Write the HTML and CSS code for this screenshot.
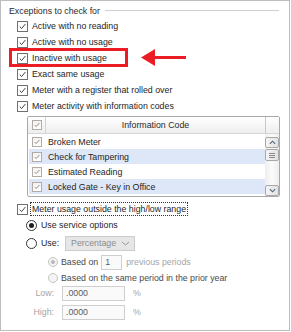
FILE: index.html
```html
<!DOCTYPE html>
<html lang="en">
<head>
  <meta charset="UTF-8" />
  <title>Exceptions to check for</title>
  <link rel="stylesheet" href="styles.css">
</head>
<body>
  <div class="frame">
    <div class="group-title">
      <span>Exceptions to check for</span>
      <div class="rule"></div>
    </div>

    <div class="checks">
      <div class="row"><span class="cb"><svg viewBox="0 0 11 11"><polyline points="2,5.5 4.5,8 9,2.5" /></svg></span>Active with no reading</div>
      <div class="row"><span class="cb"><svg viewBox="0 0 11 11"><polyline points="2,5.5 4.5,8 9,2.5" /></svg></span>Active with no usage</div>
      <div class="row"><span class="cb"><svg viewBox="0 0 11 11"><polyline points="2,5.5 4.5,8 9,2.5" /></svg></span>Inactive with usage</div>
      <div class="row"><span class="cb"><svg viewBox="0 0 11 11"><polyline points="2,5.5 4.5,8 9,2.5" /></svg></span>Exact same usage</div>
      <div class="row"><span class="cb"><svg viewBox="0 0 11 11"><polyline points="2,5.5 4.5,8 9,2.5" /></svg></span>Meter with a register that rolled over</div>
      <div class="row"><span class="cb"><svg viewBox="0 0 11 11"><polyline points="2,5.5 4.5,8 9,2.5" /></svg></span>Meter activity with information codes</div>
    </div>

    <div class="codes">
      <div class="codes-head">
        <div class="hcell cb-col"><span class="cb small"><svg viewBox="0 0 10 10"><polyline points="2,5 4,7 8,2.5" /></svg></span></div>
        <div class="hcell name">Information Code</div>
        <div class="hcell corner"></div>
      </div>
      <div class="codes-body">
        <div class="code-rows">
          <div class="code-row"><div class="cb-col"><span class="cb small"><svg viewBox="0 0 10 10"><polyline points="2,5 4,7 8,2.5" /></svg></span></div><div class="code-name">Broken Meter</div></div>
          <div class="code-row alt"><div class="cb-col"><span class="cb small"><svg viewBox="0 0 10 10"><polyline points="2,5 4,7 8,2.5" /></svg></span></div><div class="code-name">Check for Tampering</div></div>
          <div class="code-row"><div class="cb-col"><span class="cb small"><svg viewBox="0 0 10 10"><polyline points="2,5 4,7 8,2.5" /></svg></span></div><div class="code-name">Estimated Reading</div></div>
          <div class="code-row alt"><div class="cb-col"><span class="cb small"><svg viewBox="0 0 10 10"><polyline points="2,5 4,7 8,2.5" /></svg></span></div><div class="code-name">Locked Gate - Key in Office</div></div>
        </div>
        <div class="scroll">
          <div class="sbtn"><svg viewBox="0 0 8 5"><polyline points="1,4 4,1 7,4" /></svg></div>
          <div class="thumb"><svg viewBox="0 0 6 5"><path d="M0 0.5H6M0 2.5H6M0 4.5H6" /></svg></div>
          <div class="track"></div>
          <div class="sbtn"><svg viewBox="0 0 8 5"><polyline points="1,1 4,4 7,1" /></svg></div>
        </div>
      </div>
    </div>

    <div class="row range"><span class="cb"><svg viewBox="0 0 11 11"><polyline points="2,5.5 4.5,8 9,2.5" /></svg></span><span class="focus">Meter usage outside the high/low range</span></div>

    <div class="options">
      <div class="opt first"><span class="radio on"></span>Use service options</div>
      <div class="opt use"><span class="radio"></span>Use:<div class="select">Percentage<svg viewBox="0 0 9 5"><polyline points="1,1 4.5,4 8,1" /></svg></div></div>
      <div class="opt sub based"><span class="radio off on"></span>Based on<div class="field small">1</div><span class="muted">previous periods</span></div>
      <div class="opt sub prior"><span class="radio off"></span>Based on the same period in the prior year</div>
      <div class="limit low"><span class="lbl">Low:</span><div class="field">.0000</div><span class="muted">%</span></div>
      <div class="limit high"><span class="lbl">High:</span><div class="field">.0000</div><span class="muted">%</span></div>
    </div>

    <div class="mark"></div>
    <svg class="arrow" viewBox="0 0 45 17"><polygon points="0,8.5 14,0 14,17" /><rect x="13" y="7" width="32" height="3" /></svg>
  </div>
</body>
</html>
```

FILE: styles.css
```css
body {
  margin: 0;
  background: #ffffff;
  font-family: "Liberation Sans", Arial, sans-serif;
  font-size: 8.8px;
  color: #1e1e1e;
}

.frame {
  position: relative;
  box-sizing: border-box;
  width: 290px;
  height: 331px;
  border: 1px solid #bdbdbd;
  padding-top: 4px;
}

.group-title {
  display: flex;
  align-items: center;
  height: 12px;
  padding-left: 8px;
  padding-right: 10px;
  color: #2a2a2a;
}

.rule {
  flex: 1;
  height: 0;
  margin-left: 5px;
  border-top: 1px solid #d0d0d0;
  border-bottom: 1px solid #ffffff;
}

.checks {
  padding-top: 1px;
}

.row {
  display: flex;
  align-items: center;
  height: 16px;
  padding-left: 16px;
  white-space: nowrap;
}

.cb {
  box-sizing: border-box;
  display: inline-flex;
  flex: none;
  width: 11px;
  height: 11px;
  margin-right: 4px;
  border: 1px solid #6f6f6f;
  background: #ffffff;
}

.cb svg {
  width: 100%;
  height: 100%;
}

.cb polyline {
  fill: none;
  stroke: #333333;
  stroke-width: 1.1;
}

.cb.small {
  width: 10px;
  height: 10px;
  margin: 0;
  border-color: #b3aca4;
  background: linear-gradient(#f2f2f2, #ffffff);
}

.cb.small polyline {
  stroke: #8c7f74;
}

/* information code grid */
.codes {
  box-sizing: border-box;
  width: 253px;
  height: 81px;
  margin: 2px 0 0 26px;
  border: 1px solid #a9a9a9;
  border-radius: 2px;
  overflow: hidden;
}

.codes-head {
  display: flex;
  height: 16px;
  background: linear-gradient(#ffffff, #eeeeee);
  border-bottom: 1px solid #d5d5d5;
}

.hcell {
  display: flex;
  align-items: center;
  justify-content: center;
}

.cb-col {
  display: flex;
  align-items: center;
  justify-content: center;
  flex: none;
  width: 17px;
}

.hcell.cb-col {
  border-right: 1px solid #d2d2d2;
}

.hcell.name {
  flex: 1;
  color: #2a2a2a;
}

.hcell.corner {
  width: 13px;
  border-left: 1px solid #c9c9c9;
  border-radius: 0 3px 0 0;
}

.codes-body {
  display: flex;
  height: 62px;
  padding-bottom: 2px;
}

.code-rows {
  flex: 1;
  padding-left: 1px;
}

.code-row {
  display: flex;
  height: 15px;
}

.code-row.alt {
  background: #dde7f7;
}

.code-row .cb-col {
  width: 16px;
}

.code-name {
  display: flex;
  align-items: center;
  padding-left: 3px;
  white-space: nowrap;
}

.scroll {
  display: flex;
  flex-direction: column;
  width: 14px;
  padding-top: 3px;
  background: linear-gradient(90deg, #eeeeee, #fbfbfb, #eeeeee);
}

.sbtn,
.thumb {
  box-sizing: border-box;
  display: flex;
  align-items: center;
  justify-content: center;
  height: 11px;
  border: 1px solid #a8a8a8;
  border-radius: 2px;
  background: linear-gradient(90deg, #f4f4f4, #e2e2e2);
}

.sbtn svg {
  width: 7px;
  height: 5px;
}

.sbtn polyline {
  fill: none;
  stroke: #4c607a;
  stroke-width: 1.2;
}

.thumb {
  height: 12px;
  margin-top: 1px;
}

.thumb svg {
  width: 6px;
  height: 5px;
}

.thumb path {
  stroke: #8a8a8a;
  stroke-width: 1;
}

.track {
  flex: 1;
}

/* high / low range */
.range {
  margin-top: 4px;
}

.focus {
  margin-left: -1px;
  padding: 0 1px;
  outline: 1px dotted #333333;
  line-height: 12px;
}

.options {
  padding-left: 25px;
}

.opt {
  display: flex;
  align-items: center;
  height: 16px;
  white-space: nowrap;
}

.opt.use {
  height: 18px;
  margin-top: 1px;
}

.radio {
  box-sizing: border-box;
  position: relative;
  flex: none;
  width: 11px;
  height: 11px;
  margin-right: 4px;
  border: 1px solid #333333;
  border-radius: 50%;
  background: #ffffff;
}

.radio.on::after {
  content: "";
  position: absolute;
  left: 2px;
  top: 2px;
  width: 5px;
  height: 5px;
  border-radius: 50%;
  background: #1e1e1e;
}

.radio.off {
  width: 10px;
  height: 10px;
  margin-right: 3px;
  border-color: #c4c4c4;
  background: #f4f4f4;
}

.radio.off.on::after {
  left: 2px;
  top: 2px;
  width: 4px;
  height: 4px;
  background: #b8b8b8;
}

.select {
  box-sizing: border-box;
  display: flex;
  align-items: center;
  justify-content: space-between;
  width: 70px;
  height: 15px;
  margin-left: 6px;
  padding: 0 4px 0 5px;
  border: 1px solid #cccccc;
  background: #e6e6e6;
  color: #8c8c8c;
}

.select svg {
  width: 9px;
  height: 5px;
}

.select polyline {
  fill: none;
  stroke: #9a9a9a;
  stroke-width: 1;
}

.opt.sub {
  padding-left: 22px;
  color: #4a4a4a;
}

.opt.based {
  margin-top: 2px;
}

.opt.prior {
  height: 15px;
}

.field {
  box-sizing: border-box;
  display: flex;
  align-items: center;
  width: 63px;
  height: 15px;
  padding-left: 3px;
  border: 1px solid #cfcfcf;
  background: #fafafa;
  color: #5a5a5a;
}

.field.small {
  width: 21px;
  margin: 0 4px 0 3px;
}

.muted {
  color: #a5a5a5;
}

.limit {
  display: flex;
  align-items: center;
  height: 16px;
}

.limit.high {
  margin-top: 3px;
}

.lbl {
  width: 28px;
  margin-right: 8px;
  text-align: right;
  color: #a5a5a5;
}

.limit .field {
  margin-right: 8px;
}

/* annotation overlay */
.mark {
  position: absolute;
  left: 8px;
  top: 47px;
  width: 113px;
  height: 13px;
  border: 3px solid #ec1c24;
}

.arrow {
  position: absolute;
  left: 140px;
  top: 48px;
  width: 45px;
  height: 17px;
  fill: #ec1c24;
}
```
